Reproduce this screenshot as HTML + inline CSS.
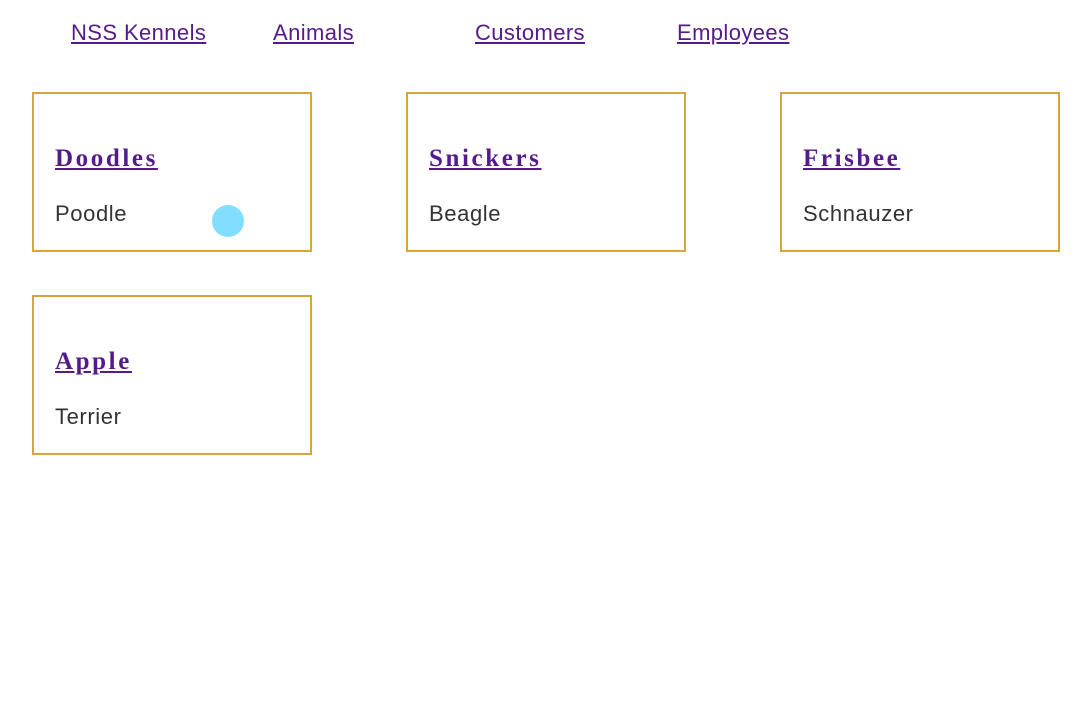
<!DOCTYPE html>
<html><head><style>
body{margin:0;background:#fff;width:1091px;height:702px;position:relative;overflow:hidden;font-family:"Liberation Sans",sans-serif}
a{color:#551a8b;text-decoration:underline}
.nav{position:absolute;top:20px;font-size:22px;line-height:26px;letter-spacing:0.4px}
.card{position:absolute;width:276px;height:156px;border:2px solid #d9a53a;}
.card h2{position:absolute;left:21px;top:51px;margin:0;font-family:"Liberation Serif",serif;font-weight:bold;font-size:25px;letter-spacing:2.6px;line-height:28px}
.card p{position:absolute;left:21px;top:108px;margin:0;font-size:22px;color:#333;line-height:24px;letter-spacing:0.6px}
.dot{position:absolute;left:212px;top:205px;width:32px;height:32px;border-radius:50%;background:#80dfff}
</style></head><body>
<a class="nav" style="left:71px">NSS Kennels</a>
<a class="nav" style="left:273px">Animals</a>
<a class="nav" style="left:475px">Customers</a>
<a class="nav" style="left:677px">Employees</a>
<div class="card" style="left:32px;top:92px"><h2><a>Doodles</a></h2><p>Poodle</p></div>
<div class="card" style="left:406px;top:92px"><h2><a>Snickers</a></h2><p>Beagle</p></div>
<div class="card" style="left:780px;top:92px"><h2><a>Frisbee</a></h2><p>Schnauzer</p></div>
<div class="card" style="left:32px;top:295px"><h2><a>Apple</a></h2><p>Terrier</p></div>
<div class="dot"></div>
</body></html>
